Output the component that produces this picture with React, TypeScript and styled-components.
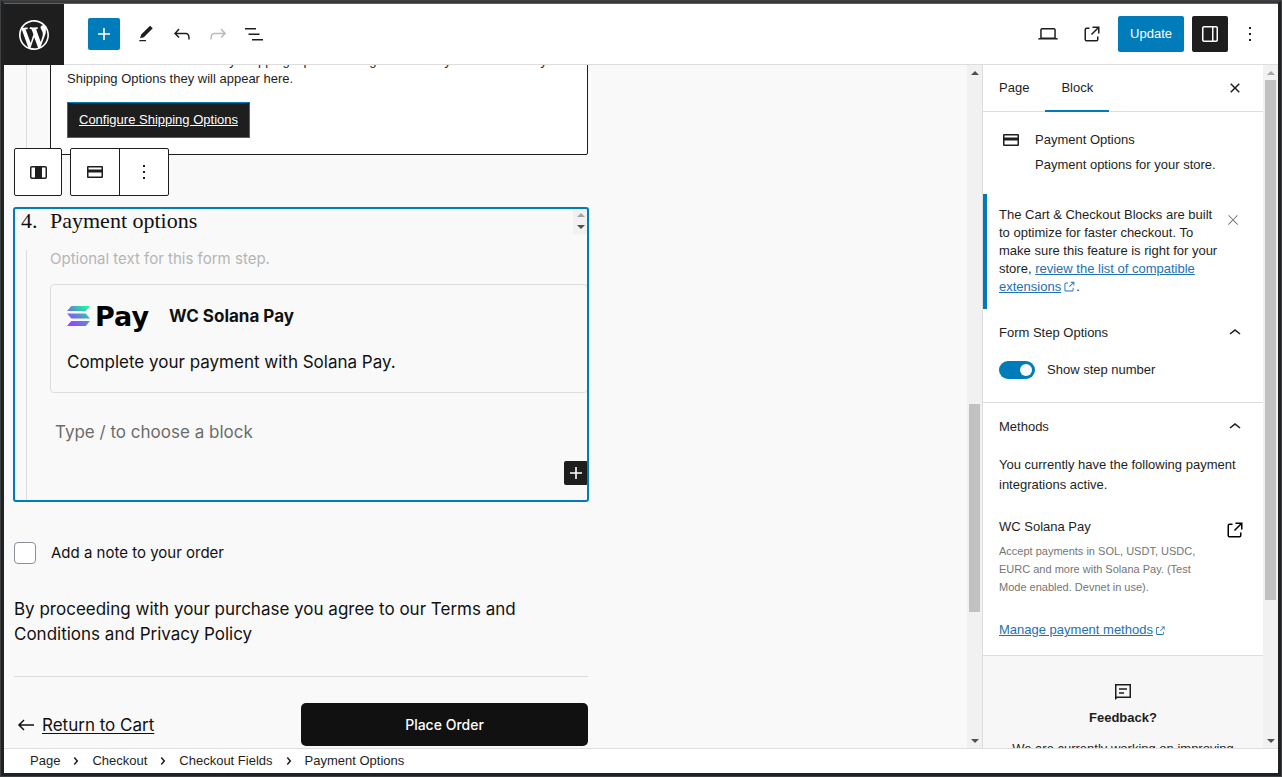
import React, { useState } from "react";
import styled, { createGlobalStyle, css } from "styled-components";

const ink = "#1e1e1e";
const blue = "#007cba";
const line = "#ddd";
const ui = `"Liberation Sans", Arial, sans-serif`;
const body = `Inter, "Liberation Sans", sans-serif`;

const GlobalStyle = createGlobalStyle`
  * { box-sizing: border-box; }
  body { margin: 0; font-family: ${ui}; font-size: 13px; line-height: 18px; color: ${ink}; }
  p, h2, h3, ul, ol { margin: 0; padding: 0; }
  button, input { font: inherit; color: inherit; }
  svg { display: block; flex: none; fill: currentColor; }
`;

const paths = {
  plus: "M18 11.2h-5.2V6h-1.6v5.2H6v1.6h5.2V18h1.6v-5.2H18z",
  edit: "M20.1 5.1L16.9 2 6.2 12.7l-1.3 4.4 4.5-1.3 10.7-10.7zM4 20.8h8v-1.5H4v1.5z",
  undo: "M18.3 11.7c-.6-.6-1.4-.9-2.3-.9H6.7l2.9-3.3-1.1-1-4.5 5L8.5 16l1-1-2.7-2.7H16c.5 0 .9.2 1.3.5 1 1 1 3.4 1 4.5v.3h1.5v-.2c0-1.5 0-4.3-1.5-5.7z",
  redo: "M15.6 6.5l-1.1 1 2.9 3.3H8c-.9 0-1.7.3-2.3.9-1.4 1.5-1.4 4.2-1.4 5.6v.2h1.5v-.3c0-1.1 0-3.5 1-4.5.3-.3.7-.5 1.3-.5h9.2L14.5 15l1.1 1.1 4.6-4.6-4.6-5z",
  list: "M3 6h11v1.5H3V6Zm3.5 5.5h11V13h-11v-1.5ZM21 17H10v1.5h11V17Z",
  laptop: "M20.5 16h-.7V8c0-1.1-.9-2-2-2H6.2c-1.1 0-2 .9-2 2v8h-.7c-.8 0-1.5.7-1.5 1.5h20c0-.8-.7-1.5-1.5-1.5zM5.7 8c0-.3.2-.5.5-.5h11.6c.3 0 .5.2.5.5v7.6H5.7V8z",
  external: "M19.5 4.5h-7V6h4.44l-5.97 5.97 1.06 1.06L18 7.06v4.44h1.5v-7Zm-13 1a2 2 0 0 0-2 2v10a2 2 0 0 0 2 2h10a2 2 0 0 0 2-2v-3H17v3a.5.5 0 0 1-.5.5h-10a.5.5 0 0 1-.5-.5v-10a.5.5 0 0 1 .5-.5h3V5.5h-3Z",
  linkOut: "M18.2 17c0 .7-.6 1.2-1.2 1.2H7c-.7 0-1.2-.6-1.2-1.2V7c0-.7.6-1.2 1.2-1.2h3.2V4.2H7C5.5 4.2 4.2 5.5 4.2 7v10c0 1.5 1.2 2.8 2.8 2.8h10c1.5 0 2.8-1.2 2.8-2.8v-3.6h-1.5V17zM14.9 3v1.5h3.7l-6.4 6.4 1.1 1.1 6.4-6.4v3.7h1.5V3h-6.3z",
  more: "M13 19h-2v-2h2v2zm0-6h-2v-2h2v2zm0-6h-2V5h2v2z",
  drawer: "M18 4H6c-1.1 0-2 .9-2 2v12c0 1.1.9 2 2 2h12c1.1 0 2-.9 2-2V6c0-1.1-.9-2-2-2zm-4 14.5H6c-.3 0-.5-.2-.5-.5V6c0-.3.2-.5.5-.5h8v13zm4.5-.5c0 .3-.2.5-.5.5h-2.5v-13H18c.3 0 .5.2.5.5v12z",
  closeSmall: "M12 13.06l3.712 3.713 1.061-1.06L13.061 12l3.712-3.712-1.06-1.06L12 10.938 8.288 7.227l-1.061 1.06L10.939 12l-3.712 3.712 1.06 1.061L12 13.061z",
  close: "M13 11.8l6.1-6.3-1-1-6.1 6.2-6.1-6.2-1 1 6.1 6.3-6.5 6.7 1 1 6.5-6.6 6.5 6.6 1-1z",
  chevronUp: "M6.5 12.4L12 8l5.5 4.4-.9 1.2L12 10l-4.5 3.6-1-1.2z",
  chevronRight: "M10.862 8.04l3.419 3.989-3.419 3.988-1.139-.976 2.582-3.012-2.582-3.012 1.139-.977z",
  card: "M5.5 9.5v-2h13v2h-13zm0 3v4h13v-4h-13zM4 7a1 1 0 011-1h14a1 1 0 011 1v10a1 1 0 01-1 1H5a1 1 0 01-1-1V7z",
  column: "M19 6H6c-1.1 0-2 .9-2 2v9c0 1.1.9 2 2 2h13c1.1 0 2-.9 2-2V8c0-1.1-.9-2-2-2zM6 17.5c-.3 0-.5-.2-.5-.5V8c0-.3.2-.5.5-.5h3v10H6zm13.5-.5c0 .3-.2.5-.5.5h-3v-10h3c.3 0 .5.2.5.5v9z",
  feedback: "M4 4h16v14H6.4L4 20V4zm1.5 1.500v11h13v-11h-13zM8 8.300h8v1.400H8V8.300zM8 12.300h5v1.400H8v-1.400z",
  arrowLeft: "M20 11.2H6.8l3.7-3.7-1-1L3.9 12l5.6 5.5 1-1-3.7-3.7H20z",
};

type IconName = keyof typeof paths;

function Icon({ name, size = 24 }: { name: IconName; size?: number }) {
  return (
    <svg width={size} height={size} viewBox="0 0 24 24" aria-hidden="true">
      <path fillRule="evenodd" d={paths[name]} />
    </svg>
  );
}

function WordPressLogo() {
  return (
    <svg width="36" height="36" viewBox="-2 -2 24 24" aria-hidden="true">
      <path d="M20 10c0-5.51-4.49-10-10-10C4.48 0 0 4.49 0 10c0 5.52 4.48 10 10 10 5.51 0 10-4.48 10-10zM7.78 15.37L4.37 6.22c.55-.02 1.17-.08 1.17-.08.5-.06.44-1.13-.06-1.11 0 0-1.45.11-2.37.11-.18 0-.37 0-.58-.01C4.12 2.69 6.87 1.11 10 1.11c2.33 0 4.45.87 6.05 2.34-.68-.11-1.65.39-1.65 1.58 0 .74.45 1.36.9 2.1.35.61.55 1.36.55 2.46 0 1.49-1.4 5-1.4 5l-3.03-8.37c.54-.02.82-.17.82-.17.5-.05.44-1.25-.06-1.22 0 0-1.44.12-2.38.12-.87 0-2.33-.12-2.33-.12-.5-.03-.56 1.2-.06 1.22l.92.08 1.26 3.41zM17.41 10c.24-.64.74-1.87.43-4.25.7 1.29 1.05 2.71 1.05 4.25 0 3.29-1.73 6.24-4.4 7.78.97-2.59 1.94-5.2 2.92-7.78zM6.1 18.09C3.12 16.65 1.11 13.53 1.11 10c0-1.3.23-2.48.72-3.59C3.25 10.3 4.67 14.2 6.1 18.09zm4.03-6.63l2.58 6.98c-.86.29-1.76.45-2.71.45-.79 0-1.57-.11-2.29-.33.81-2.38 1.62-4.74 2.42-7.1z" />
    </svg>
  );
}

/* ---------- shell ---------- */

const Shell = styled.div`
  display: flex;
  flex-direction: column;
  height: 100vh;
  min-height: 480px;
  border: 4px solid #1f2225;
  border-top: 3px solid #38383c;
  outline: 1px solid #3f4042;
  outline-offset: -1px;
  background: #fff;
`;

const Header = styled.header`
  display: flex;
  align-items: center;
  justify-content: space-between;
  height: 62px;
  flex: none;
  padding-right: 14px;
  border-top: 1px solid #606060;
  border-bottom: 1px solid ${line};
`;

const HeaderGroup = styled.div<{ $gap: number }>`
  display: flex;
  align-items: center;
  gap: ${(p) => p.$gap}px;
`;

const HomeLink = styled.a`
  display: flex;
  align-items: center;
  justify-content: center;
  width: 60px;
  height: 61px;
  margin: 0 16px -1px 0;
  background: ${ink};
  color: #fff;
`;

const IconButton = styled.button<{ $size?: number; $tone?: "blue" | "dark" }>`
  display: flex;
  align-items: center;
  justify-content: center;
  width: ${(p) => p.$size ?? 36}px;
  height: ${(p) => p.$size ?? 36}px;
  flex: none;
  padding: 0;
  border: 0;
  border-radius: 2px;
  background: transparent;
  ${(p) => p.$tone === "blue" && css`background: ${blue}; color: #fff;`}
  ${(p) => p.$tone === "dark" && css`background: ${ink}; color: #fff;`}
  &:disabled { color: #bbb; }
`;

const UpdateButton = styled.button`
  height: 36px;
  padding: 0 12px;
  border: 0;
  border-radius: 2px;
  background: ${blue};
  color: #fff;
`;

const Main = styled.div`
  display: flex;
  flex: 1;
  min-height: 0;
`;

/* ---------- scrollbars ---------- */

const Track = styled.div`
  display: flex;
  flex-direction: column;
  align-items: center;
  width: 15px;
  flex: none;
  background: #f1f1f1;
`;

const Gap = styled.div<{ $grow: number }>`
  flex: ${(p) => p.$grow} 0 0;
`;

const Thumb = styled(Gap)`
  width: 11px;
  background: #c1c1c1;
`;

const ArrowBox = styled.div<{ $height: number }>`
  display: flex;
  align-items: center;
  justify-content: center;
  height: ${(p) => p.$height}px;
  flex: none;
`;

function ScrollArrow({ up, muted, height = 15 }: { up?: boolean; muted?: boolean; height?: number }) {
  return (
    <ArrowBox $height={height}>
      <svg width="8" height="4" viewBox="0 0 8 4" aria-hidden="true">
        <path d={up ? "M0 4L4 0l4 4z" : "M0 0l4 4 4-4z"} fill={muted ? "#a3a3a3" : "#505050"} />
      </svg>
    </ArrowBox>
  );
}

function Scrollbar({ before, thumb, after }: { before: number; thumb: number; after: number }) {
  return (
    <Track aria-hidden="true">
      <ScrollArrow up muted={before === 0} />
      <Gap $grow={before} />
      <Thumb $grow={thumb} />
      <Gap $grow={after} />
      <ScrollArrow />
    </Track>
  );
}

/* ---------- canvas ---------- */

const Canvas = styled.main`
  flex: 1;
  min-width: 0;
  overflow: hidden;
  padding: 0 10px;
  background: #f9f9f9;
  color: #111;
  font-family: ${body};
  font-optical-sizing: none;
`;

const Page = styled.div`
  max-width: 574px;
  margin-top: -31px;
`;

const StepBody = styled.div`
  margin-left: 12px;
  padding-left: 23px;
  border-left: 1px solid ${line};
`;

const ShippingCard = styled.div`
  display: flex;
  flex-direction: column;
  align-items: flex-start;
  gap: 14px;
  padding: 17px 16px 16px;
  border: 1px solid ${ink};
  border-radius: 2px;
  background: #fff;
  color: ${ink};
  font-family: ${ui};
`;

const ConfigureLink = styled.a`
  padding: 8px 11px;
  border: 1px solid ${blue};
  background: ${ink};
  color: #fff;
`;

const PaymentBlock = styled.section`
  position: relative;
  margin-top: 53px;
  outline: 2px solid ${blue};
  outline-offset: -1px;
  border-radius: 2px;
`;

const BlockToolbar = styled.div`
  position: absolute;
  left: 0;
  bottom: calc(100% + 12px);
  display: flex;
  gap: 8px;
  color: ${ink};
`;

const ToolGroup = styled.div`
  display: flex;
  border: 1px solid ${ink};
  border-radius: 2px;
  background: #fff;
`;

const ToolButton = styled.button`
  display: flex;
  align-items: center;
  justify-content: center;
  width: 48px;
  height: 46px;
  padding: 0;
  border: 0;
  background: transparent;
  &:only-child { width: 46px; }
  & + & { width: 49px; border-left: 1px solid ${ink}; }
`;

const StepHead = styled.div`
  display: flex;
  height: 42px;
  padding-left: 7px;
  font-family: "Liberation Serif", serif;
  font-size: 22px;
  line-height: 25px;
`;

const StepNumber = styled.span`
  width: 29px;
`;

const StepTitle = styled.h2`
  flex: 1;
  font: inherit;
`;

const MiniScroll = styled.div`
  width: 15px;
  height: 26px;
  background: #f1f1f1;
`;

const PlaceholderInput = styled.input<{ $large?: boolean }>`
  display: block;
  width: 100%;
  height: ${(p) => (p.$large ? 27 : 18)}px;
  padding: 0 ${(p) => (p.$large ? 5 : 0)}px;
  border: 0;
  background: transparent;
  font-size: ${(p) => (p.$large ? 17 : 15)}px;
  outline: 0;
  &::placeholder { color: ${(p) => (p.$large ? "#6c6c6c" : "#b5b5b6")}; opacity: 1; }
`;

const MethodCard = styled.div`
  height: 109px;
  margin: 16px 0 25px;
  padding: 15px 16px;
  border: 1px solid ${line};
  border-radius: 4px;
`;

const MethodTitle = styled.div`
  display: flex;
  align-items: center;
  gap: 16px;
  height: 32px;
  font-size: 17px;
  font-weight: 700;
`;

const PayMark = styled.svg`
  overflow: visible;
`;

const LogoText = styled.text`
  font: 700 27px "DejaVu Sans", sans-serif;
  fill: #000;
`;

const MethodText = styled.p`
  margin-top: 18px;
  font-size: 17px;
  line-height: 25px;
`;

const InserterRow = styled.div`
  display: flex;
  justify-content: flex-end;
  padding: 16px 0;
`;

const NoteLabel = styled.label`
  display: flex;
  align-items: center;
  gap: 15px;
  margin-top: 41px;
  font-size: 15px;
`;

const CheckBox = styled.input`
  appearance: none;
  width: 22px;
  height: 22px;
  margin: 0;
  border: 1px solid #8c8f94;
  border-radius: 4px;
  background: #fff;
  &:checked { background: #111; }
`;

const Terms = styled.p`
  margin-top: 33px;
  padding-bottom: 29px;
  border-bottom: 1px solid ${line};
  font-size: 17px;
  line-height: 25px;
`;

const Actions = styled.div`
  display: grid;
  grid-template-columns: 1fr 1fr;
  align-items: center;
  margin-top: 26px;
  font-size: 17px;
`;

const ReturnLink = styled.a`
  display: flex;
  align-items: center;
  gap: 4px;
  color: #111;
  text-underline-offset: 2px;
`;

const PlaceOrder = styled.button`
  height: 43px;
  border: 0;
  border-radius: 5px;
  background: #111;
  color: #fff;
  font-size: 14px;
  font-weight: 500;
`;

function SolanaPayLogo() {
  return (
    <PayMark width="86" height="32" viewBox="0 0 86 32" role="img" aria-label="Solana Pay">
      <defs>
        <linearGradient id="sol" x1="3" y1="27" x2="20" y2="5" gradientUnits="userSpaceOnUse">
          <stop offset="0.1" stopColor="#9945ff" />
          <stop offset="0.5" stopColor="#5c86d8" />
          <stop offset="0.95" stopColor="#19fb9b" />
        </linearGradient>
      </defs>
      <g fill="url(#sol)">
        <path d="M4.3 6H23L18.700 11H0z" />
        <path d="M0 13.500H18.700L23 18.500H4.300z" />
        <path d="M4.300 21H23L18.700 26H0z" />
      </g>
      <LogoText x="28" y="26">Pay</LogoText>
    </PayMark>
  );
}

/* ---------- sidebar ---------- */

const Sidebar = styled.aside`
  display: flex;
  width: 296px;
  flex: none;
  border-left: 1px solid ${line};
`;

const Settings = styled.div`
  flex: 1;
  min-width: 0;
  overflow: hidden;
`;

const Tabs = styled.div`
  display: flex;
  align-items: center;
  height: 47px;
  padding-right: 10px;
  border-bottom: 1px solid ${line};
`;

const Tab = styled.button<{ $active?: boolean }>`
  height: 47px;
  padding: 0 16px;
  border: 0;
  background: transparent;
  box-shadow: ${(p) => (p.$active ? `inset 0 -2px ${blue}` : "none")};
`;

const CloseSlot = styled.div`
  margin-left: auto;
`;

const BlockCard = styled.div`
  display: grid;
  grid-template-columns: 24px 1fr;
  gap: 12px;
  padding: 16px 16px 19px;
`;

const CardText = styled.div`
  display: flex;
  flex-direction: column;
  gap: 5px;
  line-height: 20px;
  padding-top: 2px;
`;

const CardTitle = styled.h2`
  font: inherit;
`;

const Notice = styled.div`
  display: flex;
  align-items: flex-start;
  padding: 12px 18px 12px 12px;
  border-left: 4px solid ${blue};
`;

const NoticeText = styled.p`
  flex: 1;
  padding: 0 0 1px;
`;

const NoticeClose = styled(IconButton)`
  margin-top: 2px;
  color: #757575;
`;

const TextLink = styled.a`
  color: #2271b1;
  svg { display: inline-block; vertical-align: -3px; margin-left: 1px; }
`;

const Panel = styled.section<{ $divided?: boolean }>`
  padding: 0 16px;
  ${(p) => p.$divided && css`border-top: 1px solid ${line};`}
`;

const PanelToggle = styled.button`
  display: flex;
  align-items: center;
  justify-content: space-between;
  width: 100%;
  height: 48px;
  padding: 0;
  border: 0;
  background: transparent;
`;

const SwitchLabel = styled.label`
  display: flex;
  align-items: center;
  gap: 12px;
  padding: 4px 0 23px;
`;

const Switch = styled.input`
  appearance: none;
  display: flex;
  align-items: center;
  width: 36px;
  height: 18px;
  margin: 0;
  padding: 0 3px;
  border-radius: 9px;
  background: #757575;
  &::before { content: ""; width: 12px; height: 12px; border-radius: 50%; background: #fff; }
  &:checked { justify-content: flex-end; background: ${blue}; }
`;

const Intro = styled.p`
  padding-top: 4px;
  line-height: 20px;
`;

const Method = styled.div`
  display: grid;
  grid-template-columns: 1fr 24px;
  align-items: start;
  column-gap: 16px;
  margin-top: 22px;
  line-height: 20px;
`;

const MethodName = styled.h3`
  font: inherit;
`;

const MethodNote = styled.p`
  margin-top: 5px;
  color: #757575;
  font-size: 11px;
  line-height: 18px;
`;

const ExternalSlot = styled.a`
  margin-top: 1px;
  color: #000;
`;

const Manage = styled.p`
  padding: 25px 0 16px;
`;

const Feedback = styled.section`
  display: flex;
  flex-direction: column;
  align-items: center;
  padding: 24px 24px 0;
  border-top: 1px solid ${line};
  background: #f7f7f7;
  text-align: center;
`;

const FeedbackTitle = styled.h2`
  margin: 5px 0 13px;
  font-size: 13px;
  line-height: 18px;
`;

/* ---------- footer ---------- */

const Footer = styled.footer`
  flex: none;
  height: 25px;
  padding-left: 26px;
  border-top: 1px solid ${line};
`;

const Crumbs = styled.ol`
  display: flex;
  gap: 4px;
  list-style: none;
`;

const Crumb = styled.li`
  display: flex;
  align-items: center;
  gap: 4px;
  height: 24px;
`;

const CrumbButton = styled.button`
  padding: 0;
  border: 0;
  background: transparent;
`;

const crumbs = ["Page", "Checkout", "Checkout Fields", "Payment Options"];

export default function App() {
  const [showStep, setShowStep] = useState(true);
  const [note, setNote] = useState(false);

  return (
    <>
      <GlobalStyle />
      <Shell>
        <Header>
          <HeaderGroup $gap={8}>
            <HomeLink href="#" aria-label="View pages"><WordPressLogo /></HomeLink>
            <IconButton $size={32} $tone="blue" aria-label="Add block"><Icon name="plus" /></IconButton>
            <HeaderGroup $gap={0}>
              <IconButton aria-label="Tools"><Icon name="edit" size={20} /></IconButton>
              <IconButton aria-label="Undo"><Icon name="undo" /></IconButton>
              <IconButton aria-label="Redo" disabled><Icon name="redo" /></IconButton>
              <IconButton aria-label="Document overview"><Icon name="list" /></IconButton>
            </HeaderGroup>
          </HeaderGroup>
          <HeaderGroup $gap={8}>
            <IconButton aria-label="View"><Icon name="laptop" /></IconButton>
            <IconButton aria-label="View page"><Icon name="external" /></IconButton>
            <UpdateButton>Update</UpdateButton>
            <IconButton $tone="dark" aria-label="Settings"><Icon name="drawer" /></IconButton>
            <IconButton $size={28} aria-label="Options"><Icon name="more" /></IconButton>
          </HeaderGroup>
        </Header>

        <Main>
          <Canvas>
            <Page>
              <StepBody>
                <ShippingCard>
                  <p>
                    Your store does not have any Shipping Options configured. Once you have added your
                    Shipping Options they will appear here.
                  </p>
                  <ConfigureLink href="#">Configure Shipping Options</ConfigureLink>
                </ShippingCard>
              </StepBody>

              <PaymentBlock>
                <BlockToolbar role="toolbar" aria-label="Block tools">
                  <ToolGroup>
                    <ToolButton aria-label="Select parent block"><Icon name="column" /></ToolButton>
                  </ToolGroup>
                  <ToolGroup>
                    <ToolButton aria-label="Payment Options"><Icon name="card" /></ToolButton>
                    <ToolButton aria-label="Options"><Icon name="more" /></ToolButton>
                  </ToolGroup>
                </BlockToolbar>
                <StepHead>
                  <StepNumber>4.</StepNumber>
                  <StepTitle>Payment options</StepTitle>
                  <MiniScroll aria-hidden="true">
                    <ScrollArrow up muted height={14} />
                    <ScrollArrow height={10} />
                  </MiniScroll>
                </StepHead>
                <StepBody>
                  <PlaceholderInput aria-label="Step description" placeholder="Optional text for this form step." />
                  <MethodCard>
                    <MethodTitle>
                      <SolanaPayLogo />
                      WC Solana Pay
                    </MethodTitle>
                    <MethodText>Complete your payment with Solana Pay.</MethodText>
                  </MethodCard>
                  <PlaceholderInput $large aria-label="Empty block" placeholder="Type / to choose a block" />
                  <InserterRow>
                    <IconButton $size={24} $tone="dark" aria-label="Add block"><Icon name="plus" /></IconButton>
                  </InserterRow>
                </StepBody>
              </PaymentBlock>

              <NoteLabel>
                <CheckBox type="checkbox" checked={note} onChange={(e) => setNote(e.target.checked)} />
                Add a note to your order
              </NoteLabel>
              <Terms>
                By proceeding with your purchase you agree to our Terms and Conditions and Privacy Policy
              </Terms>
              <Actions>
                <ReturnLink href="#"><Icon name="arrowLeft" />Return to Cart</ReturnLink>
                <PlaceOrder>Place Order</PlaceOrder>
              </Actions>
            </Page>
          </Canvas>
          <Scrollbar before={324} thumb={208} after={121} />

          <Sidebar>
            <Settings>
              <Tabs>
                <Tab>Page</Tab>
                <Tab $active>Block</Tab>
                <CloseSlot>
                  <IconButton aria-label="Close settings"><Icon name="closeSmall" /></IconButton>
                </CloseSlot>
              </Tabs>
              <BlockCard>
                <Icon name="card" />
                <CardText>
                  <CardTitle>Payment Options</CardTitle>
                  <p>Payment options for your store.</p>
                </CardText>
              </BlockCard>
              <Notice>
                <NoticeText>
                  The Cart &amp; Checkout Blocks are built to optimize for faster checkout. To make sure this
                  feature is right for your store,{" "}
                  <TextLink href="#">review the list of compatible extensions<Icon name="linkOut" size={14} /></TextLink>.
                </NoticeText>
                <NoticeClose $size={24} aria-label="Dismiss notice"><Icon name="close" size={16} /></NoticeClose>
              </Notice>
              <Panel>
                <PanelToggle aria-expanded="true">
                  Form Step Options
                  <Icon name="chevronUp" />
                </PanelToggle>
                <SwitchLabel>
                  <Switch type="checkbox" role="switch" checked={showStep} onChange={(e) => setShowStep(e.target.checked)} />
                  Show step number
                </SwitchLabel>
              </Panel>
              <Panel $divided>
                <PanelToggle aria-expanded="true">
                  Methods
                  <Icon name="chevronUp" />
                </PanelToggle>
                <Intro>You currently have the following payment integrations active.</Intro>
                <Method>
                  <div>
                    <MethodName>WC Solana Pay</MethodName>
                    <MethodNote>
                      Accept payments in SOL, USDT, USDC, EURC and more with Solana Pay. (Test Mode enabled. Devnet in use).
                    </MethodNote>
                  </div>
                  <ExternalSlot href="#" aria-label="Edit WC Solana Pay"><Icon name="external" /></ExternalSlot>
                </Method>
                <Manage>
                  <TextLink href="#">Manage payment methods<Icon name="linkOut" size={12} /></TextLink>
                </Manage>
              </Panel>
              <Feedback>
                <Icon name="feedback" />
                <FeedbackTitle>Feedback?</FeedbackTitle>
                <p>We are currently working on improving our cart and checkout blocks.</p>
              </Feedback>
            </Settings>
            <Scrollbar before={0} thumb={520} after={133} />
          </Sidebar>
        </Main>

        <Footer>
          <nav aria-label="Block breadcrumb">
            <Crumbs>
              {crumbs.map((name, i) => (
                <Crumb key={name}>
                  <CrumbButton>{name}</CrumbButton>
                  {i < crumbs.length - 1 && <Icon name="chevronRight" />}
                </Crumb>
              ))}
            </Crumbs>
          </nav>
        </Footer>
      </Shell>
    </>
  );
}
